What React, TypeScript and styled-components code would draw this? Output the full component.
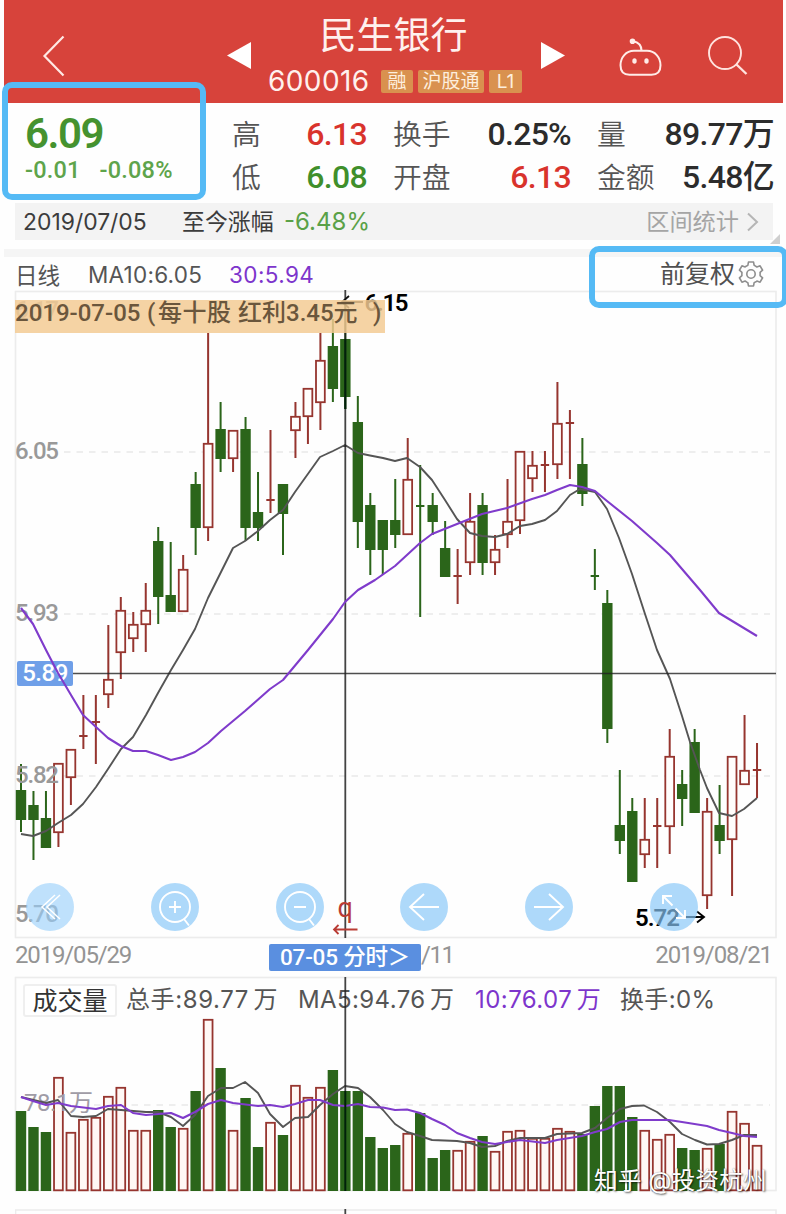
import React from 'react';
import styled, { createGlobalStyle } from 'styled-components';

const din = `Roboto, "Noto Sans CJK SC", sans-serif`;
const sans = `Inter, "Noto Sans CJK SC", sans-serif`;

const GlobalStyle = createGlobalStyle`
  * { box-sizing: border-box; }
  body { margin: 0; background: #fff; }
`;

const Page = styled.main`
  position: relative;
  width: 786px;
  height: 1214px;
  overflow: hidden;
  background: #fefefe;
  font-family: ${sans};
  color: #444;
  display: flex;
  flex-direction: column;
`;

const Header = styled.header`
  flex: none;
  height: 103px;
  margin: 0 3px 0 4px;
  background: #d7433b;
  color: #fff1ee;
  display: grid;
  grid-template-columns: 223px 24px 290px 24px 54px 43px 46px 40px;
`;

const IconSlot = styled.div<{ $left?: number; $top: number }>`
  padding: ${(p) => p.$top}px 0 0 ${(p) => p.$left ?? 0}px;
  svg { display: block; overflow: visible; }
`;

const Heading = styled.div`
  display: flex;
  flex-direction: column;
  align-items: center;
`;

const Title = styled.h1`
  margin: 13px 5px 0 0;
  height: 45px;
  line-height: 45px;
  font-size: 37px;
  font-weight: 400;
`;

const CodeRow = styled.div`
  display: flex;
  align-items: center;
  gap: 5px;
  height: 24px;
  margin: 11px 2px 0 0;
`;

const Code = styled.span`
  font-size: 28px;
  line-height: 24px;
  width: 108px;
  letter-spacing: 0.4px;
`;

const Badge = styled.span<{ $w: number }>`
  width: ${(p) => p.$w}px;
  height: 23px;
  line-height: 23px;
  border-radius: 2px;
  background: #d9914f;
  color: #fdeedd;
  font-size: 19px;
  text-align: center;
`;

const Quote = styled.section`
  flex: none;
  height: 100px;
  display: flex;
`;

const PriceBlock = styled.div`
  width: 206px;
  margin-right: 26px;
  padding: 9px 0 0 25px;
  font-family: ${din};
  color: #45922f;
`;

const Price = styled.div`
  font-size: 42px;
  font-weight: 600;
  line-height: 44px;
  letter-spacing: -1.5px;
`;

const Delta = styled.div`
  display: flex;
  gap: 19px;
  font-size: 23.5px;
  font-weight: 500;
  line-height: 26px;
  letter-spacing: 0.2px;
  color: #5ea44b;
  padding-top: 1px;
`;

const Stats = styled.dl`
  margin: 9px 0 0;
  display: grid;
  grid-template-columns: 135px 178px 177px;
  grid-auto-rows: 43px;
  column-gap: 26px;
`;

const Stat = styled.div`
  display: flex;
  justify-content: space-between;
  align-items: center;
  white-space: nowrap;
`;

const StatLabel = styled.dt`
  font-size: 28.8px;
  line-height: 42px;
  padding-top: 2px;
  font-weight: 350;
  color: #555;
`;

const StatValue = styled.dd<{ $color?: string }>`
  margin: 0;
  font-family: ${din};
  font-size: 32px;
  line-height: 40px;
  font-weight: 500;
  letter-spacing: -0.7px;
  color: ${(p) => p.$color ?? '#2c2c2c'};
`;

const Summary = styled.section`
  flex: none;
  height: 37px;
  margin: 0 13px 0 15px;
  padding: 0 14px 0 8px;
  background: #f3f3f3;
  display: flex;
  align-items: center;
  white-space: nowrap;
`;

const SummaryText = styled.span<{ $w?: number; $color?: string; $size?: number; $push?: boolean }>`
  width: ${(p) => (p.$w ? `${p.$w}px` : 'auto')};
  color: ${(p) => p.$color ?? '#3c3c3c'};
  font-size: ${(p) => p.$size ?? 22.9}px;
  line-height: 36px;
  padding-top: 1px;
  margin-left: ${(p) => (p.$push ? 'auto' : 0)};
`;

const Divider = styled.div`
  flex: none;
  height: 8px;
  margin: 9px 3px 0 4px;
  background: #f5f5f5;
`;

const Legend = styled.section`
  flex: none;
  height: 34px;
  padding: 0 22px 0 15px;
  display: flex;
  align-items: center;
  font-size: 22.5px;
  white-space: nowrap;
`;

const LegendItem = styled.span<{ $w?: number; $purple?: boolean; $ls?: number }>`
  width: ${(p) => (p.$w ? `${p.$w}px` : 'auto')};
  color: ${(p) => (p.$purple ? '#7d35cc' : '#555')};
  letter-spacing: ${(p) => p.$ls ?? 0.25}px;
`;

const Adjust = styled.span`
  margin-left: auto;
  display: flex;
  align-items: center;
  gap: 3px;
  font-size: 25px;
  line-height: 32px;
  color: #505050;
`;

const Panel = styled.section<{ $h: number }>`
  position: relative;
  flex: none;
  height: ${(p) => p.$h}px;
  margin: 0 9px 0 15px;
  > svg { display: block; overflow: visible; }
`;

const Dividend = styled.div`
  position: absolute;
  left: 0;
  top: 9px;
  width: 370px;
  height: 33px;
  background: rgba(243, 203, 147, 0.84);
  font-family: ${din};
  font-size: 24px;
  line-height: 26px;
  font-weight: 500;
  color: #6a563c;
  display: flex;
  white-space: nowrap;
`;

const DividendPart = styled.span<{ $w: number; $ls?: number }>`
  width: ${(p) => p.$w}px;
  letter-spacing: ${(p) => p.$ls ?? 0}px;
`;

const PriceTag = styled.div`
  position: absolute;
  left: 2px;
  top: 370px;
  width: 56px;
  height: 25px;
  border-radius: 2px;
  background: #6f9fe8;
  color: #fff;
  font-family: ${din};
  font-size: 24px;
  font-weight: 500;
  line-height: 25px;
  text-align: center;
  letter-spacing: -0.5px;
`;

const Controls = styled.div`
  position: absolute;
  left: 11px;
  top: 592px;
  width: 672px;
  display: flex;
  justify-content: space-between;
`;

const RoundButton = styled.button<{ $faded?: boolean }>`
  width: 48px;
  height: 48px;
  padding: 0;
  border: 0;
  border-radius: 50%;
  background: ${(p) => (p.$faded ? 'rgba(151, 207, 250, 0.62)' : 'rgba(135, 199, 247, 0.68)')};
  svg { display: block; overflow: visible; }
`;

const Dates = styled.div`
  flex: none;
  height: 39px;
  padding: 0 14px 0 15px;
  display: flex;
  align-items: center;
  font-family: ${din};
  font-size: 24px;
  color: #949494;
`;

const DateText = styled.span<{ $w?: number; $push?: boolean; $ls?: number }>`
  width: ${(p) => (p.$w ? `${p.$w}px` : 'auto')};
  margin-left: ${(p) => (p.$push ? 'auto' : 0)};
  letter-spacing: ${(p) => p.$ls ?? 0}px;
  padding-bottom: 5px;
`;

const DateTag = styled.span`
  width: 152px;
  height: 27px;
  line-height: 26px;
  border-radius: 2px;
  background: #5a8fe0;
  color: #fff;
  font-weight: 500;
  font-size: 22.5px;
  letter-spacing: -0.2px;
  text-align: center;
  white-space: nowrap;
`;

const VolumeLegend = styled.div`
  position: absolute;
  left: 8px;
  top: 7px;
  height: 33px;
  display: flex;
  align-items: center;
  font-size: 24px;
  line-height: 30px;
  white-space: nowrap;
  span { padding-bottom: 2px; }
`;

const VolumeButton = styled.button`
  width: 94px;
  height: 33px;
  margin-right: 9px;
  padding: 0;
  border: 2px solid #efefef;
  border-radius: 3px;
  background: #fff;
  color: #333;
  font: 400 25px/30px ${sans};
`;

const Unit = styled.i`
  font-style: normal;
  margin-left: 4.5px;
`;

const Callout = styled.div<{ $x: number; $y: number; $w: number; $h: number }>`
  position: absolute;
  left: ${(p) => p.$x}px;
  top: ${(p) => p.$y}px;
  width: ${(p) => p.$w}px;
  height: ${(p) => p.$h}px;
  border: 6px solid #55baf5;
  border-radius: 10px;
`;

const Corner = styled.svg`
  position: absolute;
  left: 770px;
  top: 234px;
`;

const Watermark = styled.div`
  position: absolute;
  left: 594px;
  top: 1165px;
  display: flex;
  gap: 7px;
  font-size: 23.8px;
  line-height: 32px;
  color: #fff;
  white-space: nowrap;
  text-shadow: 1px 1px 2px rgba(0, 0, 0, 0.65), 0 0 1px rgba(0, 0, 0, 0.4);
`;

const GREEN = '#2b651a';
const RED = '#96352f';
const DARK = '#555';
const PURPLE = '#7f3bcb';
const AXIS_X = 21;
const STEP = 12.475;

type Candle = [kind: 'g' | 'r', high: number, top: number, bottom: number, low: number, volume: number];

/* high, body top, body bottom, low, volume-bar top; a flat body has top === bottom */
const candles: Candle[] = [
  ['g', 764, 790, 820, 832, 1111], ['g', 791, 805, 820, 860, 1127], ['g', 791, 818, 848, 848, 1132],
  ['r', 763, 763, 833, 847, 1077], ['r', 749, 749, 778, 805, 1132], ['r', 695, 736, 736, 749, 1119],
  ['r', 695, 722, 722, 764, 1117], ['r', 625, 679, 695, 708, 1096], ['r', 597, 610, 653, 679, 1087],
  ['r', 612, 624, 639, 652, 1130], ['r', 583, 610, 625, 652, 1130], ['g', 527, 541, 597, 624, 1110],
  ['g', 542, 595, 612, 612, 1127], ['r', 555, 569, 612, 612, 1128], ['g', 472, 484, 528, 555, 1091],
  ['r', 333, 443, 528, 541, 1019], ['g', 402, 429, 459, 472, 1068], ['r', 430, 430, 459, 472, 1130],
  ['g', 417, 429, 528, 541, 1098], ['g', 472, 512, 528, 541, 1147], ['r', 430, 500, 500, 513, 1122],
  ['g', 484, 484, 514, 555, 1135], ['r', 402, 416, 431, 458, 1085], ['r', 388, 388, 417, 444, 1097],
  ['r', 333, 360, 403, 430, 1087], ['g', 319, 346, 389, 402, 1070], ['g', 305, 339, 397, 409, 1091],
  ['g', 396, 422, 522, 548, 1091], ['g', 493, 505, 550, 575, 1137], ['g', 520, 520, 550, 575, 1148],
  ['g', 479, 520, 535, 548, 1145], ['r', 438, 479, 535, 535, 1133], ['g', 465, 506, 506, 617, 1113],
  ['g', 493, 505, 522, 535, 1158], ['g', 521, 548, 577, 577, 1150], ['r', 549, 576, 576, 604, 1150],
  ['r', 493, 521, 563, 575, 1141], ['g', 493, 505, 563, 575, 1136], ['r', 535, 549, 563, 575, 1151],
  ['r', 479, 521, 535, 548, 1131], ['r', 451, 451, 521, 534, 1130], ['r', 451, 465, 479, 492, 1138],
  ['r', 451, 465, 465, 492, 1138], ['r', 382, 423, 465, 479, 1128], ['r', 410, 423, 423, 479, 1131],
  ['g', 438, 464, 494, 506, 1134], ['g', 549, 576, 576, 590, 1106], ['g', 590, 603, 729, 743, 1086],
  ['g', 770, 825, 841, 854, 1086], ['g', 798, 811, 882, 882, 1117], ['r', 798, 839, 855, 868, 1130],
  ['r', 798, 826, 826, 868, 1139], ['r', 729, 756, 827, 854, 1134], ['g', 770, 784, 799, 826, 1148],
  ['g', 729, 742, 813, 813, 1150], ['r', 798, 811, 896, 909, 1148], ['g', 785, 825, 841, 854, 1144],
  ['r', 756, 756, 840, 896, 1111], ['r', 715, 770, 785, 785, 1123], ['r', 743, 770, 770, 798, 1145],
];

const ma10 =
  '21,834 33,836 46,831 58,823 71,815 83,804 96,787 108,769 121,749 133,737 146,715 158,693 171,670 183,650 195,629 208,598 233,548 245,541 258,531 270,520 283,510 295,492 320,457 333,451 345,445 358,453 370,455.5 383,458 395,461 407,458 420,467 432,480 445,500 457,519 470,533 482,536 495,537 507,534 520,526 532,524 545,520 557,511 570,495 580,489 595,492 607,509 619,538 632,574 645,614 657,650 670,679 682,716 690,742 700,770 707,788 719,813 732,816 744,809 757,798';
const ma30 =
  '21,608 33,624 46,650 58,673 71,695 83,715 96,727 108,738 121,746 133,751 146,751 158,755 171,760 183,757 195,752 208,743 221,731 245,711 270,689 283,680 308,650 333,619 345,602 358,590 375,580 395,566 420,543 432,534 457,524 482,514 507,508 532,499 545,495 557,490 570,485 582,487 595,491 607,501 632,521 657,543 670,555 700,590 719,613 757,636';
const vol5 =
  '21,1097 46,1103 58,1100 71,1116 83,1117 96,1116 108,1109 121,1110 146,1112 158,1112 171,1117 183,1126 195,1115 208,1096 221,1088 233,1088 245,1082 258,1093 270,1114 283,1127 295,1118 308,1117 320,1105 333,1094 345,1086 358,1088 370,1097 383,1110 395,1124 407,1132 420,1136 432,1140 457,1141 470,1143 482,1147 495,1146 507,1141 520,1138 545,1138 557,1134 582,1133 595,1128 607,1118 620,1109 632,1106 644,1105.5 657,1112 670,1122 682,1134 695,1140 707,1144.5 719,1144 732,1140 744,1135 757,1135';
const vol10 =
  '21,1097 33,1101 46,1105 58,1103 71,1106 96,1109 108,1106 121,1105 133,1113 146,1115 171,1113 183,1118 195,1112 208,1104 221,1100 233,1103 258,1106 270,1105 283,1107 295,1104 308,1100 320,1100 333,1105 345,1106 358,1104 370,1107 383,1107.5 395,1110 407,1109.5 420,1113 432,1119 445,1125 457,1133 470,1138 482,1142 495,1144 507,1142 520,1140 545,1143 557,1140 582,1136 595,1132 607,1129 620,1122 632,1120 669,1120 682,1122 707,1126 719,1130 732,1133 744,1136 757,1137';

const axisFont = { fontFamily: 'Roboto, sans-serif', fontSize: 24 } as const;

function Frame({ y, h }: { y: number; h: number }) {
  return <rect x={15.5} y={y + 0.5} width={760.5} height={h - 1} fill="none" stroke="#ececec" strokeWidth={1.6} />;
}

function GridLine({ y }: { y: number }) {
  return <path d={`M64 ${y}H770`} stroke="#e9e9e9" strokeWidth={1.6} strokeDasharray="6.5 6" />;
}

function AxisLabel({ y, children }: { y: number; children: string }) {
  return (
    <text {...axisFont} x={15} y={y} fill="#999" fontWeight={500} textLength={44}>
      {children}
    </text>
  );
}

function CandleMark({ c, x }: { c: Candle; x: number }) {
  const [kind, high, top, bottom, low] = c;
  const color = kind === 'g' ? GREEN : RED;
  if (top === bottom) {
    return <path d={`M${x} ${high}V${low}M${x - 4.2} ${top}h8.4`} stroke={color} strokeWidth={2} />;
  }
  return (
    <g>
      <path d={`M${x} ${high}V${top}M${x} ${bottom}V${low}`} stroke={color} strokeWidth={2} />
      {kind === 'g' ? (
        <rect x={x - 5.2} y={top} width={10.4} height={bottom - top} fill={color} />
      ) : (
        <rect x={x - 4.4} y={top + 0.8} width={8.8} height={bottom - top - 1.6} fill="#fffdfc" stroke={color} strokeWidth={1.8} />
      )}
    </g>
  );
}

function PriceChart() {
  return (
    <svg width={762} height={647} viewBox="15 291 762 647">
      <Frame y={291} h={647} />
      <GridLine y={452} />
      <GridLine y={614} />
      <GridLine y={776} />
      {candles.map((c, i) => (
        <CandleMark key={i} c={c} x={AXIS_X + i * STEP} />
      ))}
      <AxisLabel y={318}>6.17</AxisLabel>
      <AxisLabel y={458.5}>6.05</AxisLabel>
      <AxisLabel y={620.5}>5.93</AxisLabel>
      <AxisLabel y={782.5}>5.82</AxisLabel>
      <AxisLabel y={921.5}>5.70</AxisLabel>
      <polyline points={ma10} fill="none" stroke={DARK} strokeWidth={1.9} strokeLinejoin="round" />
      <path d="M72 673.5H776" stroke="#222" strokeOpacity={0.8} strokeWidth={1.6} />
      <path d="M345.3 290V938" stroke="#222" strokeOpacity={0.85} strokeWidth={1.8} />
      <path d="M345.3 339V409" stroke="#00210a" strokeWidth={2} />
      <path d="M363 302H342M349 296l-7 6 7 6" fill="none" stroke="#111" strokeWidth={1.8} />
      <text {...axisFont} x={364.5} y={310.5} fill="#000" fontWeight={600} textLength={44}>6.15</text>
      <text {...axisFont} x={635} y={926} fill="#000" fontWeight={600} textLength={45}>5.72</text>
      <path d="M684 917H704M697 911.5l7 5.5-7 5.5" fill="none" stroke="#000" strokeWidth={1.9} />
      <text {...axisFont} x={337.5} y={916.5} fontSize={27} fill="#b93c34">q</text>
      <path d="M357.5 929.5H334M338.5 925l-4.5 4.5 4.5 4.5" fill="none" stroke="#b93c34" strokeWidth={1.8} />
    </svg>
  );
}

const Overlay = styled.svg`
  position: absolute;
  left: 0;
  top: 0;
  pointer-events: none;
`;

function PurpleAverage() {
  return (
    <Overlay width={762} height={647} viewBox="15 291 762 647">
      <polyline points={ma30} fill="none" stroke={PURPLE} strokeWidth={2.1} strokeLinejoin="round" />
    </Overlay>
  );
}

function VolumeChart() {
  return (
    <svg width={762} height={214} viewBox="15 977 762 214">
      <Frame y={977} h={214} />
      <path d="M94 1105H770" stroke="#e9e9e9" strokeWidth={1.4} strokeDasharray="6.5 6" />
      {candles.map((c, i) => {
        const x = AXIS_X + i * STEP;
        return c[0] === 'g' ? (
          <rect key={i} x={x - 5.2} y={c[5]} width={10.4} height={1191 - c[5]} fill={GREEN} />
        ) : (
          <rect key={i} x={x - 4.4} y={c[5] + 0.8} width={8.8} height={1189.5 - c[5]} fill="#fff8f5" stroke={RED} strokeWidth={1.8} />
        );
      })}
      <text x={24} y={1111} fontFamily={'Roboto, "Noto Sans CJK SC", sans-serif'} fontSize={24} fill="#a09ca6" textLength={69}>78.1万</text>
      <polyline points={vol5} fill="none" stroke={DARK} strokeWidth={1.9} strokeLinejoin="round" />
      <polyline points={vol10} fill="none" stroke={PURPLE} strokeWidth={2.1} strokeLinejoin="round" />
      <path d="M345.3 1091V1191" stroke="#00210a" strokeWidth={2} />
    </svg>
  );
}

const LowerPanel = styled.section`
  flex: none;
  height: 5px;
  margin: 18px 9px 0 15px;
  svg { display: block; }
`;

function Gear() {
  const pts: string[] = [];
  for (let k = 0; k < 6; k++) {
    [[-36, 9.2], [-20, 9.2], [-12, 12.2], [12, 12.2], [20, 9.2]].forEach(([d, r]) => {
      const a = ((k * 60 - 90 + d) * Math.PI) / 180;
      pts.push(`${(13 + r * Math.cos(a)).toFixed(2)},${(13 + r * Math.sin(a)).toFixed(2)}`);
    });
  }
  return (
    <svg width={26} height={26} fill="none" stroke="#8e8e8e" strokeWidth={1.6} strokeLinejoin="round">
      <polygon points={pts.join(' ')} />
      <circle cx={13} cy={13} r={4.2} />
    </svg>
  );
}

function ControlIcon({ children }: { children: React.ReactNode }) {
  return (
    <svg width={48} height={48} fill="none" stroke="#fff" strokeWidth={1.9}>
      {children}
    </svg>
  );
}

export default function App() {
  return (
    <Page>
      <GlobalStyle />
      <Header>
        <IconSlot $left={39} $top={36}>
          <svg width={21} height={40} fill="none" stroke="#ffe9e4" strokeWidth={2.2}>
            <path d="M20.5 .5L1.5 20l19 19.5" />
          </svg>
        </IconSlot>
        <IconSlot $top={42}>
          <svg width={24} height={27}><path d="M0 13.5L24 0v27z" fill="#fff" /></svg>
        </IconSlot>
        <Heading>
          <Title>民生银行</Title>
          <CodeRow>
            <Code>600016</Code>
            <Badge $w={32}>融</Badge>
            <Badge $w={66}>沪股通</Badge>
            <Badge $w={33}>L1</Badge>
          </CodeRow>
        </Heading>
        <IconSlot $top={42}>
          <svg width={24} height={27}><path d="M24 13.5L0 0v27z" fill="#fff" /></svg>
        </IconSlot>
        <span />
        <IconSlot $top={38}>
          <svg width={43} height={38} fill="none" stroke="#ffece8" strokeWidth={2}>
            <path d="M15 12.8h13c8 0 13.5 6.5 13.5 14.5 0 6.5-3 9.5-9 9.500H10.500c-6 0-9-3-9-9.500 0-8 5.500-14.500 13.500-14.500zM22.500 12.500C22.500 7 20 4.500 14 3.300" />
            <circle cx={13.5} cy={3.3} r={1.8} fill="#ffece8" />
            <ellipse cx={15.5} cy={23} rx={2.2} ry={2.7} fill="#ffece8" stroke="none" />
            <ellipse cx={27.5} cy={23} rx={2.2} ry={2.7} fill="#ffece8" stroke="none" />
          </svg>
        </IconSlot>
        <span />
        <IconSlot $top={36}>
          <svg width={40} height={40} fill="none" stroke="#ffe3de" strokeWidth={1.9}>
            <circle cx={17} cy={17} r={16} />
            <path d="M28.5 28.5L38.5 38" strokeWidth={2.4} />
          </svg>
        </IconSlot>
      </Header>

      <Quote>
        <PriceBlock>
          <Price>6.09</Price>
          <Delta>
            <span>-0.01</span>
            <span>-0.08%</span>
          </Delta>
        </PriceBlock>
        <Stats>
          <Stat><StatLabel>高</StatLabel><StatValue $color="#d9332c">6.13</StatValue></Stat>
          <Stat><StatLabel>换手</StatLabel><StatValue>0.25%</StatValue></Stat>
          <Stat><StatLabel>量</StatLabel><StatValue>89.77万</StatValue></Stat>
          <Stat><StatLabel>低</StatLabel><StatValue $color="#3f8f2b">6.08</StatValue></Stat>
          <Stat><StatLabel>开盘</StatLabel><StatValue $color="#d9332c">6.13</StatValue></Stat>
          <Stat><StatLabel>金额</StatLabel><StatValue>5.48亿</StatValue></Stat>
        </Stats>
      </Quote>

      <Summary>
        <SummaryText $w={159}>2019/07/05</SummaryText>
        <SummaryText $w={102}>至今涨幅</SummaryText>
        <SummaryText $color="#5aa147" $size={24}>-6.48%</SummaryText>
        <SummaryText $push $color="#a5a5a5" $size={23.2}>区间统计</SummaryText>
        <svg width={20} height={20} fill="none" stroke="#b5b5b5" strokeWidth={2}>
          <path d="M9 1.5l9 8.5-9 8.5" />
        </svg>
      </Summary>
      <Divider />

      <Legend>
        <LegendItem $w={73} $ls={0}>日线</LegendItem>
        <LegendItem $w={141}>MA10:6.05</LegendItem>
        <LegendItem $purple $ls={0.4}>30:5.94</LegendItem>
        <Adjust>前复权<Gear /></Adjust>
      </Legend>

      <Panel $h={647}>
        <PriceChart />
        <Dividend>
          <DividendPart $w={132} $ls={0}>2019-07-05</DividendPart>
          <DividendPart $w={11}>(</DividendPart>
          <DividendPart $w={80} $ls={0.5}>每十股</DividendPart>
          <DividendPart $w={135}>红利3.45元</DividendPart>
          <DividendPart $w={8}>)</DividendPart>
        </Dividend>
        <PriceTag>5.89</PriceTag>
        <PurpleAverage />
        <Controls>
          <RoundButton $faded aria-label="最早">
            <ControlIcon><path d="M29 12L16 24l13 12M34 12L21 24l13 12" strokeWidth={1.5} /></ControlIcon>
          </RoundButton>
          <RoundButton aria-label="放大">
            <ControlIcon><circle cx={24} cy={24} r={15} /><path d="M24 18v12M18 24h12M33 36l5 6.5" /></ControlIcon>
          </RoundButton>
          <RoundButton aria-label="缩小">
            <ControlIcon><circle cx={24} cy={24} r={15} /><path d="M18 24h12M33 36l5 6.5" /></ControlIcon>
          </RoundButton>
          <RoundButton aria-label="左移">
            <ControlIcon><path d="M39 24H10M24 11L10 24l14 13" /></ControlIcon>
          </RoundButton>
          <RoundButton aria-label="右移">
            <ControlIcon><path d="M9 24h29M24 11l14 13-14 13" /></ControlIcon>
          </RoundButton>
          <RoundButton aria-label="全屏">
            <ControlIcon><path d="M13 21v-8h9M13 13l9.5 9.5M35 27v8h-9M35 35l-9.5-9.5" /></ControlIcon>
          </RoundButton>
        </Controls>
      </Panel>

      <Dates>
        <DateText $w={254} $ls={-1.15}>2019/05/29</DateText>
        <DateTag>07-05 分时＞</DateTag>
        <DateText $ls={-1.5}>/11</DateText>
        <DateText $push $ls={-1.1}>2019/08/21</DateText>
      </Dates>

      <Panel $h={214}>
        <VolumeChart />
        <VolumeLegend>
          <VolumeButton>成交量</VolumeButton>
          <LegendItem $w={172} $ls={0.6}>总手:89.77<Unit>万</Unit></LegendItem>
          <LegendItem $w={177} $ls={0.4}>MA5:94.76<Unit>万</Unit></LegendItem>
          <LegendItem $w={145} $ls={0.45} $purple>10:76.07<Unit>万</Unit></LegendItem>
          <LegendItem $ls={0.35}>换手:0%</LegendItem>
        </VolumeLegend>
        <Overlay width={762} height={214} viewBox="15 977 762 214">
          <path d="M345.3 977V1091" stroke="#222" strokeOpacity={0.85} strokeWidth={1.8} />
        </Overlay>
      </Panel>
      <LowerPanel>
        <svg width={762} height={5} viewBox="15 1209 762 5">
          <path d="M15.5 1214V1210H776V1214" fill="none" stroke="#ececec" strokeWidth={1.6} />
          <path d="M345.3 1209V1214" stroke="#444" strokeWidth={1.8} />
        </svg>
      </LowerPanel>

      <Corner width={10} height={10}><path d="M10 0V10H0z" fill="#cfcfcf" /></Corner>
      <Callout $x={2} $y={82} $w={204} $h={118} />
      <Callout $x={589} $y={246} $w={199} $h={62} />
      <Watermark>
        <span>知乎</span>
        <span>@投资杭州</span>
      </Watermark>
    </Page>
  );
}
